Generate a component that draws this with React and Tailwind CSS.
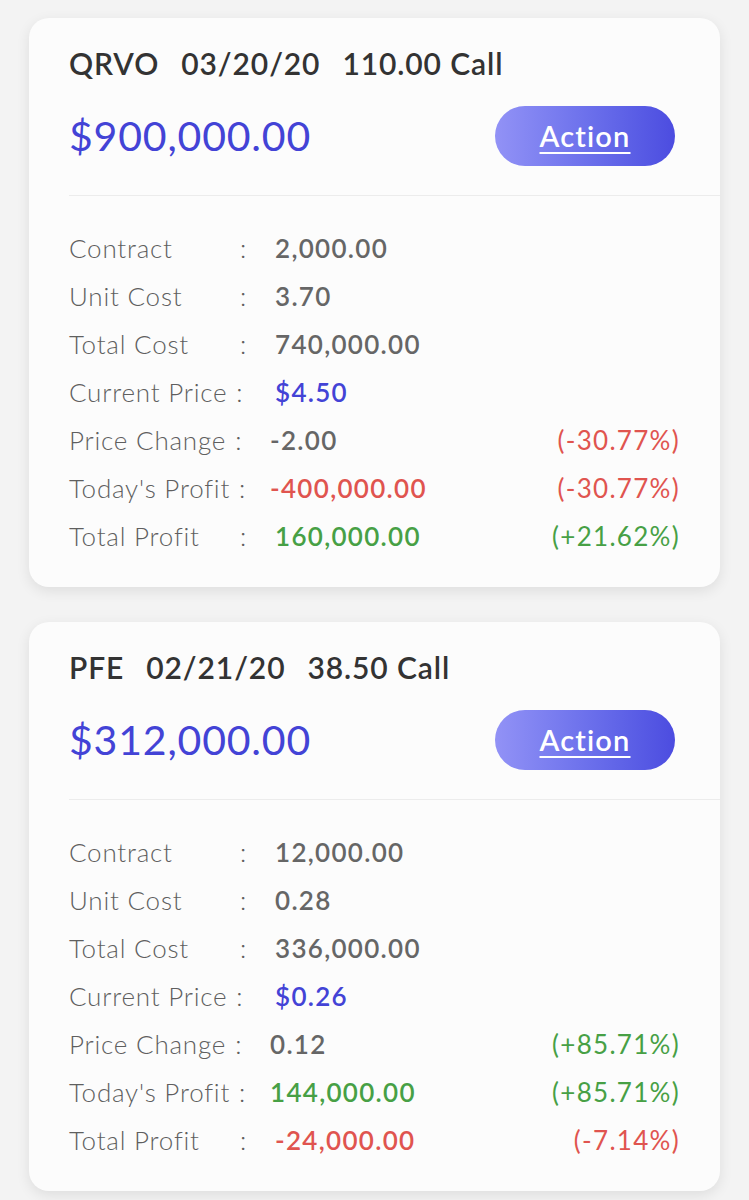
import React from 'react';

const BLUE = 'text-[#4343d6]';
const RED = 'text-[#e0544f]';
const GREEN = 'text-[#47a045]';
const GRAY = 'text-[#666666]';

const positions = [
  {
    title: ['QRVO', '03/20/20', '110.00 Call'],
    amount: '$900,000.00',
    rows: [
      { label: 'Contract', value: '2,000.00', color: GRAY },
      { label: 'Unit Cost', value: '3.70', color: GRAY },
      { label: 'Total Cost', value: '740,000.00', color: GRAY },
      { label: 'Current Price', value: '$4.50', color: BLUE, inline: 'w-[206px]' },
      { label: 'Price Change', value: '-2.00', color: GRAY, inline: 'w-[201px]', pct: '(-30.77%)', pctColor: RED },
      { label: "Today's Profit", value: '-400,000.00', color: RED, inline: 'w-[201px]', pct: '(-30.77%)', pctColor: RED },
      { label: 'Total Profit', value: '160,000.00', color: GREEN, pct: '(+21.62%)', pctColor: GREEN },
    ],
  },
  {
    title: ['PFE', '02/21/20', '38.50 Call'],
    amount: '$312,000.00',
    rows: [
      { label: 'Contract', value: '12,000.00', color: GRAY },
      { label: 'Unit Cost', value: '0.28', color: GRAY },
      { label: 'Total Cost', value: '336,000.00', color: GRAY },
      { label: 'Current Price', value: '$0.26', color: BLUE, inline: 'w-[206px]' },
      { label: 'Price Change', value: '0.12', color: GRAY, inline: 'w-[201px]', pct: '(+85.71%)', pctColor: GREEN },
      { label: "Today's Profit", value: '144,000.00', color: GREEN, inline: 'w-[201px]', pct: '(+85.71%)', pctColor: GREEN },
      { label: 'Total Profit', value: '-24,000.00', color: RED, pct: '(-7.14%)', pctColor: RED },
    ],
  },
];

function Row({ row }) {
  return (
    <div className="flex items-center h-[48px] pr-10 text-[26px]">
      {row.inline ? (
        <div className={`flex items-center shrink-0 ${row.inline} text-[#5f5f5f] font-light tracking-[0.03em] whitespace-nowrap`}>
          <span>{row.label}</span>
          <span className="ml-[9px]">:</span>
        </div>
      ) : (
        <div className="flex items-center justify-between shrink-0 w-[178px] mr-[28px] text-[#5f5f5f] font-light tracking-[0.03em]">
          <span>{row.label}</span>
          <span>:</span>
        </div>
      )}
      <span className={`font-semibold tracking-[0.05em] ${row.color}`}>{row.value}</span>
      {row.pct && <span className={`ml-auto tracking-[0.05em] ${row.pctColor}`}>{row.pct}</span>}
    </div>
  );
}

function Card({ data }) {
  return (
    <div className="bg-[#fcfcfc] rounded-[20px] shadow-[0_4px_14px_rgba(0,0,0,0.09)] pl-10 pt-[27px] pb-[27px]">
      <div className="flex gap-[22px] h-[36px] items-center text-[30px] font-semibold text-[#333333] tracking-[0.03em] leading-none">
        {data.title.map((t) => (
          <span key={t}>{t}</span>
        ))}
      </div>
      <div className="flex items-center justify-between mt-[25px] pr-[45px] h-[60px]">
        <span className={`text-[41px] tracking-[0.02em] ${BLUE}`}>{data.amount}</span>
        <button className="w-[180px] h-[60px] rounded-full bg-gradient-to-r from-[#9292f6] to-[#4c4ce0] text-white text-[29px] font-semibold tracking-[0.04em] underline underline-offset-[5px] decoration-2">
          Action
        </button>
      </div>
      <div className="mt-[29px] h-px bg-[#ececec]" />
      <div className="mt-[28px]">
        {data.rows.map((r) => (
          <Row key={r.label} row={r} />
        ))}
      </div>
    </div>
  );
}

export default function App() {
  return (
    <div
      className="min-h-[1200px] bg-[#f3f3f3] px-[29px] pt-[18px] pb-[10px] flex flex-col gap-[35px]"
      style={{ fontFamily: 'Lato, "Open Sans", sans-serif' }}
    >
      {positions.map((p) => (
        <Card key={p.amount} data={p} />
      ))}
    </div>
  );
}
